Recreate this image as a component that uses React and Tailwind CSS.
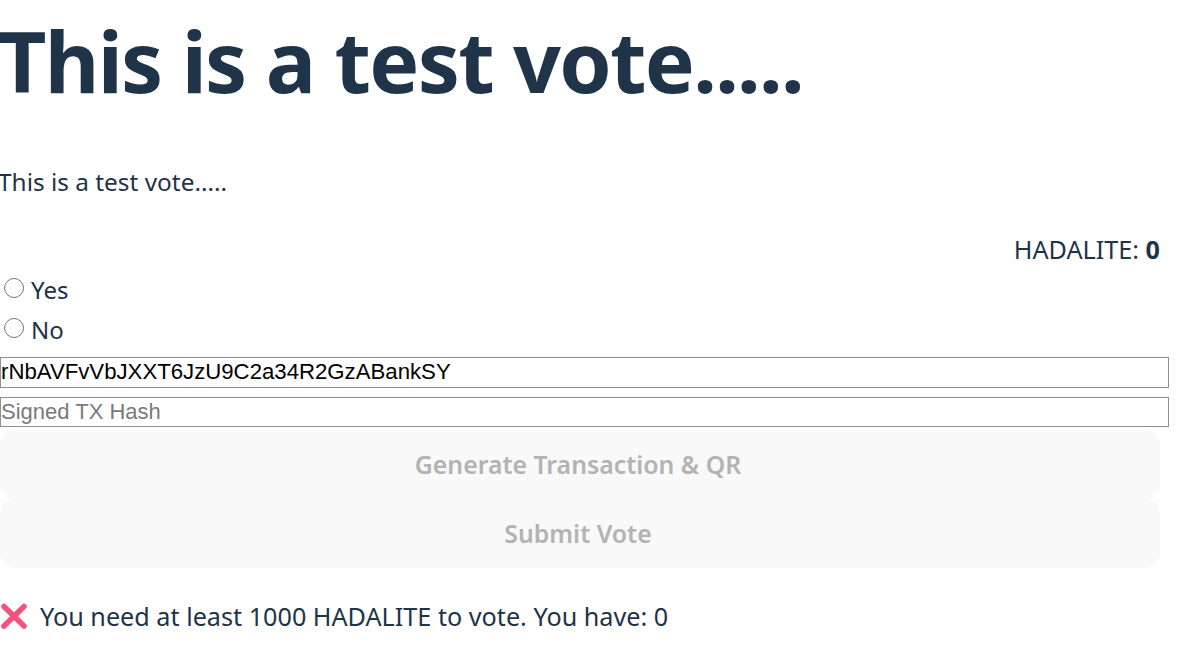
import React from "react"

const font = "font-['Noto_Sans',sans-serif]"

const CrossIcon = () => (
  <svg width="28" height="28" viewBox="0 0 28 28" className="shrink-0" aria-hidden="true">
    <path d="M4 4.5 L24 24 M24 4.5 L4 24" stroke="#f4527d" strokeWidth="5.5" strokeLinecap="round" />
  </svg>
)

const Option = ({ label }) => (
  <label className="flex items-center h-[40px]">
    <input type="radio" name="vote" className="w-[20px] h-[20px] ml-[4px] mt-[-4px] shrink-0" />
    <span className="ml-[7px] text-[24px] leading-[40px]">{label}</span>
  </label>
)

export default function App() {
  return (
    <div className={`w-[1200px] h-[646px] overflow-hidden bg-white text-[#1f3349] ${font}`}>
      <h1 className="mt-[8px] -ml-[2px] text-[84px] leading-[106px] font-bold tracking-[-1.7px] whitespace-nowrap">This is a test vote.....</h1>
      <p className="mt-[50px] -ml-[2px] text-[24.4px] leading-[36px]">This is a test vote.....</p>
      <div className="mt-[31px] pr-[40px] text-right text-[25.2px] leading-[36px]">
        HADALITE: <strong>0</strong>
      </div>
      <div className="mt-[3px]">
        <Option label="Yes" />
        <Option label="No" />
      </div>
      <input
        type="text"
        readOnly
        value="rNbAVFvVbJXXT6JzU9C2a34R2GzABankSY"
        className="block w-[1169px] h-[31px] mt-[7px] px-0 pb-[2px] border border-[#8f8f8f] text-[22.2px] text-black font-['Liberation_Sans',sans-serif] outline-none"
      />
      <input
        type="text"
        placeholder="Signed TX Hash"
        className="block w-[1169px] h-[30px] mt-[9px] px-0 pb-[2px] border border-[#8f8f8f] text-[22px] text-black placeholder:text-[#7a7a7a] font-['Liberation_Sans',sans-serif] outline-none"
      />
      <button disabled className="block w-[1160px] h-[69px] mt-[3px] pr-[4px] rounded-[14px] bg-[#f9f9f9] text-[#b3b3b3] text-[24.8px] font-semibold">
        Generate Transaction &amp; QR
      </button>
      <button disabled className="block w-[1160px] h-[69px] pr-[4px] rounded-[14px] bg-[#f9f9f9] text-[#b3b3b3] text-[24.8px] font-semibold">
        Submit Vote
      </button>
      <div className="flex items-center mt-[30px] text-[25.2px] leading-[36px]">
        <CrossIcon />
        <span className="ml-[12px] whitespace-nowrap">You need at least 1000 HADALITE to vote. You have: 0</span>
      </div>
    </div>
  )
}
